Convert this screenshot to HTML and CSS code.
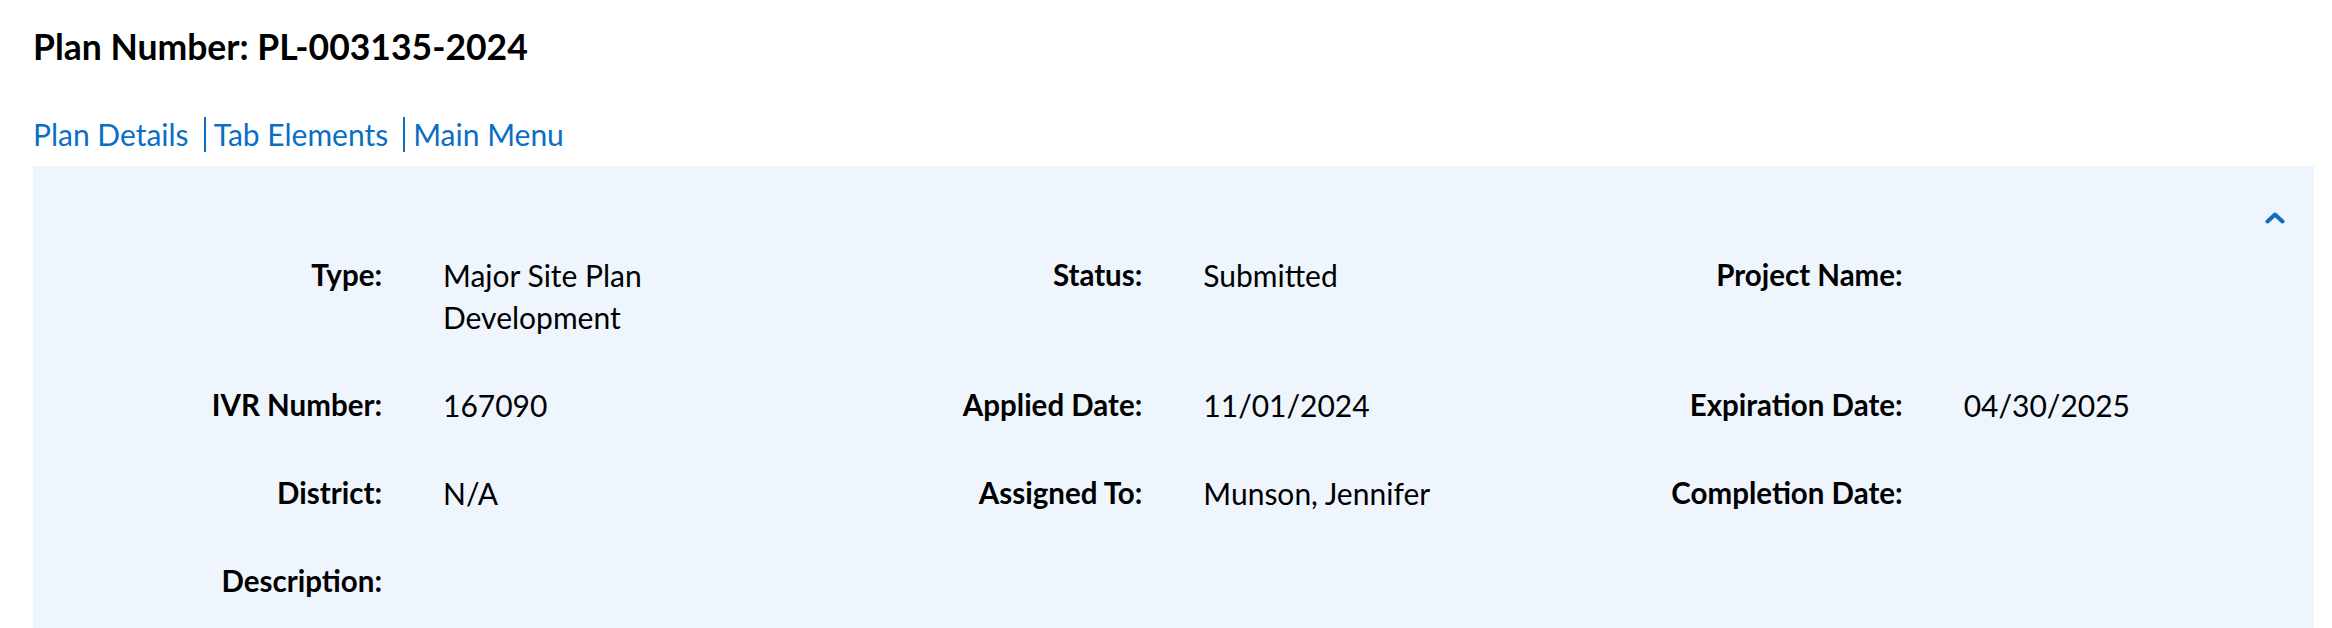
FILE: index.html
```html
<!DOCTYPE html>
<html lang="en">
<head>
<meta charset="utf-8">
<title>Plan Number: PL-003135-2024</title>
<link rel="stylesheet" href="styles.css">
</head>
<body>
<div class="page">
  <h1 class="title">Plan Number: PL-003135-2024</h1>
  <nav class="crumbs">
    <a class="crumb" href="#">Plan Details</a>
    <a class="crumb crumb-sep" href="#">Tab Elements</a>
    <a class="crumb crumb-sep" href="#">Main Menu</a>
  </nav>
  <section class="panel">
    <div class="panel-head">
      <button class="toggle" type="button" aria-label="Collapse">
        <svg width="20" height="12" viewBox="0 0 20 12"><polyline points="2.5,9.5 10,2.5 17.5,9.5" fill="none" stroke="currentColor" stroke-width="4" stroke-linecap="round" stroke-linejoin="round"/></svg>
      </button>
    </div>
    <div class="fields">
      <div class="field"><div class="label">Type:</div><div class="value">Major Site Plan Development</div></div>
      <div class="field"><div class="label">Status:</div><div class="value">Submitted</div></div>
      <div class="field"><div class="label">Project Name:</div><div class="value"></div></div>

      <div class="field"><div class="label">IVR Number:</div><div class="value">167090</div></div>
      <div class="field"><div class="label">Applied Date:</div><div class="value">11/01/2024</div></div>
      <div class="field"><div class="label">Expiration Date:</div><div class="value">04/30/2025</div></div>

      <div class="field"><div class="label">District:</div><div class="value">N/A</div></div>
      <div class="field"><div class="label">Assigned To:</div><div class="value">Munson, Jennifer</div></div>
      <div class="field"><div class="label">Completion Date:</div><div class="value"></div></div>

      <div class="field"><div class="label">Description:</div><div class="value"></div></div>
    </div>
  </section>
</div>
</body>
</html>
```

FILE: styles.css
```css
* { box-sizing: border-box; }

html, body {
  margin: 0;
  padding: 0;
  background: #ffffff;
}

body {
  font-family: Lato, "Open Sans", "Liberation Sans", sans-serif;
  color: #000000;
}

.page {
  padding: 25px 18px 0 33px;
}

.title {
  margin: 0;
  font-size: 35.5px;
  line-height: 43px;
  font-weight: 700;
}

.crumbs {
  display: flex;
  margin-top: 49px;
}

.crumb {
  font-size: 30px;
  line-height: 35px;
  color: #0b6ec5;
  text-decoration: none;
}

.crumb-sep {
  border-left: 2px solid #0b6ec5;
  margin-left: 15px;
  padding-left: 8px;
}

.panel {
  margin-top: 14px;
  background: #eef5fd;
  padding-bottom: 28px;
}

.panel-head {
  display: flex;
  justify-content: flex-end;
  height: 88px;
  padding: 46px 29px 0 0;
}

.toggle {
  display: block;
  width: 20px;
  height: 12px;
  padding: 0;
  border: 0;
  background: none;
  color: #0b6ec5;
  cursor: pointer;
}

.toggle svg { display: block; }

.fields {
  display: grid;
  grid-template-columns: repeat(3, 1fr);
  row-gap: 46px;
}

.field {
  display: grid;
  grid-template-columns: 349px 1fr;
  column-gap: 61px;
  line-height: 42px;
}

.label {
  font-size: 29.5px;
  font-weight: 700;
  text-align: right;
}

.value {
  font-size: 30px;
  font-weight: 400;
}
```
